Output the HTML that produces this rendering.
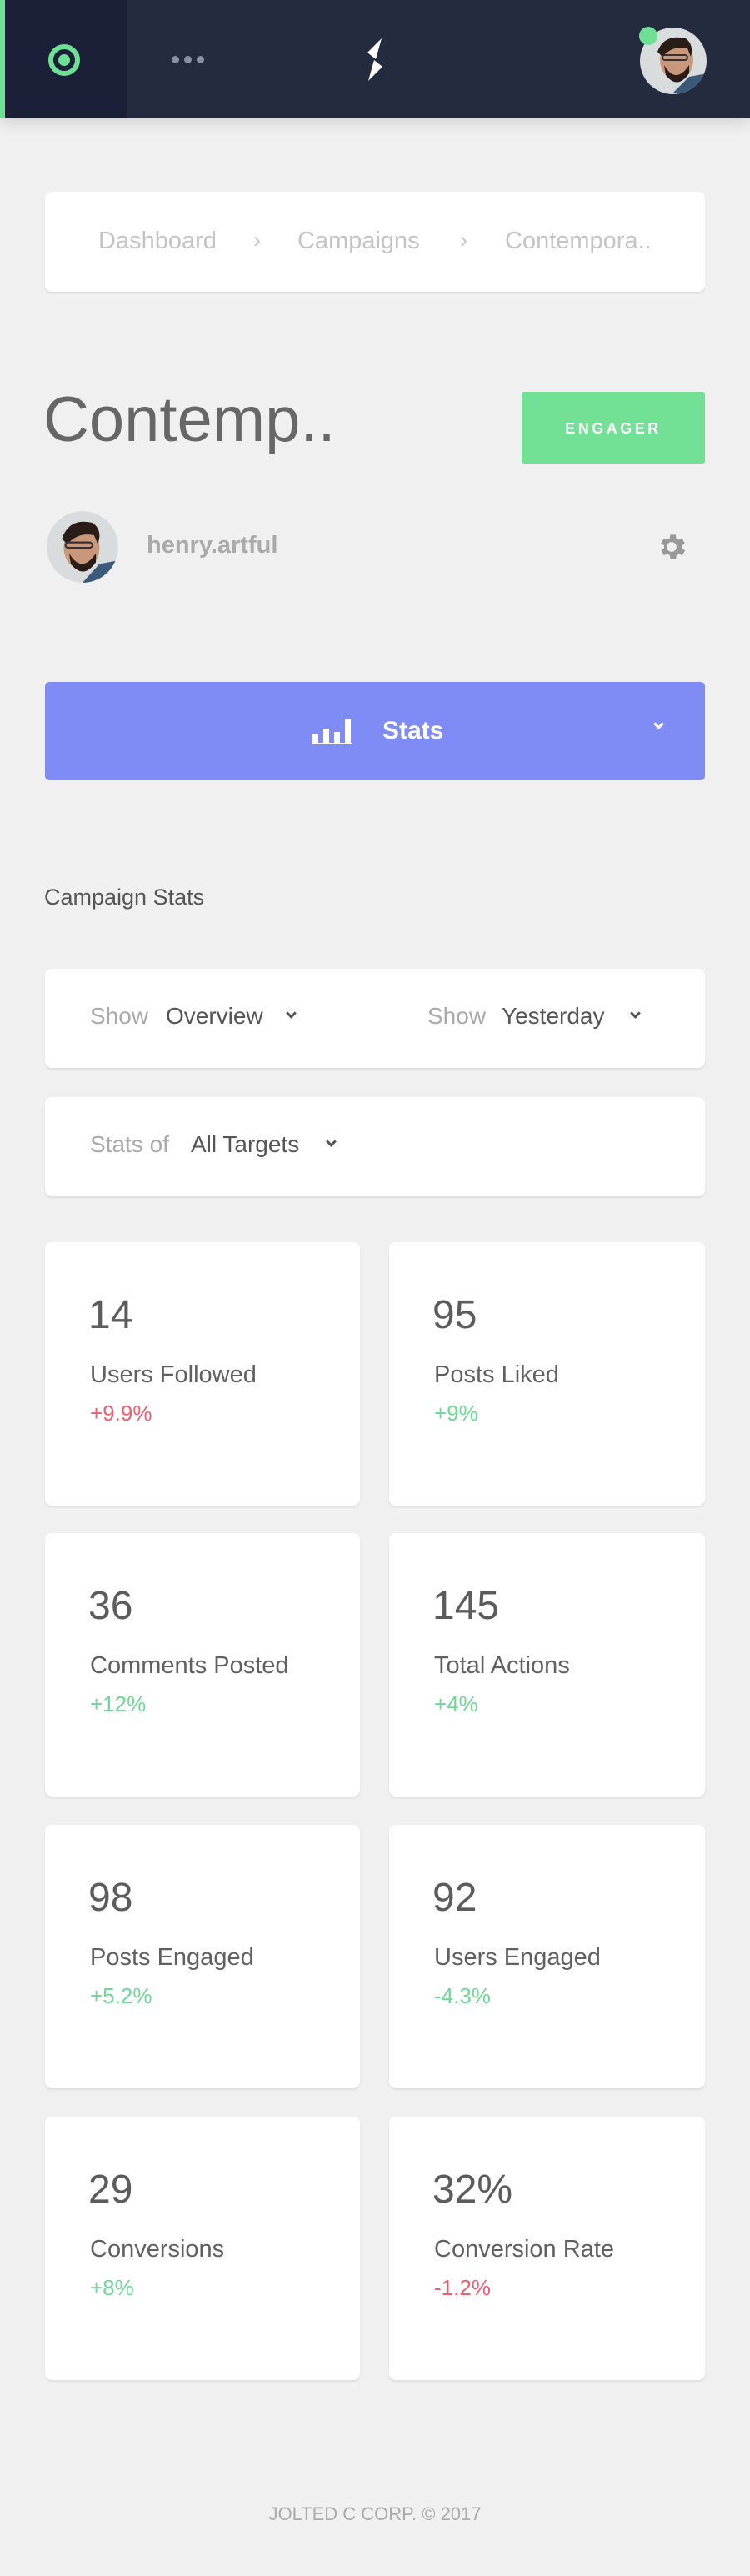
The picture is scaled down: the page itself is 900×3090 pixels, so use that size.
<!DOCTYPE html>
<html><head><meta charset="utf-8"><style>
*{margin:0;padding:0;box-sizing:border-box}
body{width:900px;height:3090px;background:#f0f0f0;font-family:"Liberation Sans",sans-serif;position:relative;overflow:hidden}
.a{position:absolute}
.card{position:absolute;background:#fff;border-radius:8px;box-shadow:0 2px 2px rgba(0,0,0,.08)}
.t{position:absolute;white-space:nowrap;line-height:1}
.num{font-size:48px;color:#5c5c5c}
.lab{font-size:29px;color:#606060}
.g{color:#6ed894}.r{color:#ef5d6e}
.chev{position:absolute;width:9px;height:9px;border-right:3px solid #555;border-bottom:3px solid #555;transform:rotate(45deg)}
</style></head><body>
<div class="a" style="left:0;top:0;width:900px;height:142px;background:#252b3f;box-shadow:0 6px 16px rgba(0,0,0,.12)"></div>
<div class="a" style="left:0;top:0;width:152px;height:142px;background:#1b2038"></div>
<div class="a" style="left:0;top:0;width:6px;height:142px;background:#6ee094"></div>
<div class="a" style="left:58px;top:53px;width:38px;height:38px;border-radius:50%;border:6px solid #6ee094"></div>
<div class="a" style="left:70px;top:65px;width:14px;height:14px;border-radius:50%;background:#6ee094"></div>
<div class="a" style="left:206px;top:67px;width:9px;height:9px;border-radius:50%;background:#8a8fa3"></div>
<div class="a" style="left:221px;top:67px;width:9px;height:9px;border-radius:50%;background:#8a8fa3"></div>
<div class="a" style="left:236px;top:67px;width:9px;height:9px;border-radius:50%;background:#8a8fa3"></div>
<svg class="a" style="left:0;top:0" width="900" height="142"><polygon points="458,46 441,63 451,71" fill="#fff"/><polygon points="449,72 459,80 442,97" fill="#fff"/></svg>
<svg class="a" style="left:767px;top:32px" width="82" height="82" viewBox="0 0 82 82">
<defs><clipPath id="c1"><circle cx="41" cy="41" r="40"/></clipPath></defs>
<g clip-path="url(#c1)"><rect width="82" height="82" fill="#d8dcdc"/><path d="M40 80 L60 60 L82 56 L82 82Z" fill="#3b5a7a"/><ellipse cx="45" cy="40" rx="20" ry="24" fill="#c9987c"/><path d="M22 30 Q30 8 56 14 Q66 22 62 36 L58 26 Q40 22 28 36Z" fill="#2a1c16"/><path d="M30 46 Q44 70 60 46 L60 56 Q46 76 32 58Z" fill="#2a1c16"/><rect x="28" y="34" width="30" height="6" rx="3" fill="none" stroke="#333" stroke-width="2"/></g></svg>
<div class="a" style="left:767px;top:32px;width:22px;height:22px;border-radius:50%;background:#6ee094"></div>

<div class="card" style="left:54px;top:230px;width:792px;height:120px"></div>
<div class="t" style="left:118px;top:275px;font-size:29px;color:#c4c4c4">Dashboard</div>
<div class="t" style="left:304px;top:275px;font-size:27px;color:#c4c4c4">›</div>
<div class="t" style="left:357px;top:275px;font-size:29px;color:#c4c4c4">Campaigns</div>
<div class="t" style="left:552px;top:275px;font-size:27px;color:#c4c4c4">›</div>
<div class="t" style="left:606px;top:275px;font-size:29px;color:#c4c4c4">Contempora..</div>

<div class="t" style="left:52px;top:466px;font-size:76px;color:#676767">Contemp..</div>
<div class="a" style="left:626px;top:470px;width:220px;height:86px;background:#72e095;border-radius:3px"></div>
<div class="t" style="left:626px;top:505px;width:220px;text-align:center;font-size:18px;font-weight:bold;letter-spacing:3.5px;color:#fff">ENGAGER</div>

<svg class="a" style="left:55px;top:612px" width="88" height="88" viewBox="0 0 82 82">
<defs><clipPath id="c2"><circle cx="41" cy="41" r="40"/></clipPath></defs>
<g clip-path="url(#c2)"><rect width="82" height="82" fill="#d8dcdc"/><path d="M40 82 L60 60 L82 56 L82 82Z" fill="#3b5a7a"/><ellipse cx="40" cy="42" rx="20" ry="24" fill="#c9987c"/><path d="M18 32 Q26 8 52 14 Q64 22 58 38 L54 28 Q36 24 24 38Z" fill="#2a1c16"/><path d="M26 48 Q40 72 56 48 L56 58 Q42 78 28 60Z" fill="#2a1c16"/><rect x="22" y="36" width="30" height="6" rx="3" fill="none" stroke="#333" stroke-width="2"/></g></svg>
<div class="t" style="left:176px;top:640px;font-size:29px;color:#aaa;font-weight:bold">henry.artful</div>
<svg class="a" style="left:786px;top:636px" width="40" height="40" viewBox="0 0 24 24"><path fill="#999" d="M19.4 13a7.5 7.5 0 0 0 0-2l2.1-1.6-2-3.5-2.5 1a7 7 0 0 0-1.7-1L15 3.2h-4l-.4 2.7a7 7 0 0 0-1.7 1l-2.5-1-2 3.5L6.6 11a7.5 7.5 0 0 0 0 2l-2.1 1.6 2 3.5 2.5-1a7 7 0 0 0 1.7 1l.4 2.7h4l.4-2.7a7 7 0 0 0 1.7-1l2.5 1 2-3.5zM12 15.5a3.5 3.5 0 1 1 0-7 3.5 3.5 0 0 1 0 7z"/></svg>

<div class="a" style="left:54px;top:818px;width:792px;height:118px;background:#7f8cf5;border-radius:5px"></div>
<svg class="a" style="left:374px;top:860px" width="50" height="34"><rect x="1" y="20" width="7" height="12" fill="#fff"/><rect x="14" y="14" width="7" height="18" fill="#fff"/><rect x="27" y="18" width="7" height="14" fill="#fff"/><rect x="40" y="3" width="7" height="29" fill="#fff"/><rect x="0" y="31" width="48" height="2" fill="#fff"/></svg>
<div class="t" style="left:459px;top:862px;font-size:30px;color:#fff;font-weight:bold">Stats</div>
<div class="chev" style="left:786px;top:864px;border-color:#fff"></div>

<div class="t" style="left:53px;top:1063px;font-size:27px;color:#555">Campaign Stats</div>

<div class="card" style="left:54px;top:1162px;width:792px;height:119px"></div>
<div class="t" style="left:108px;top:1205px;font-size:28px;color:#aaa">Show</div>
<div class="t" style="left:199px;top:1205px;font-size:28px;color:#555">Overview</div>
<div class="chev" style="left:345px;top:1211px"></div>
<div class="t" style="left:513px;top:1205px;font-size:28px;color:#aaa">Show</div>
<div class="t" style="left:602px;top:1205px;font-size:28px;color:#555">Yesterday</div>
<div class="chev" style="left:758px;top:1211px"></div>

<div class="card" style="left:54px;top:1316px;width:792px;height:119px"></div>
<div class="t" style="left:108px;top:1359px;font-size:28px;color:#aaa">Stats of</div>
<div class="t" style="left:229px;top:1359px;font-size:28px;color:#555">All Targets</div>
<div class="chev" style="left:393px;top:1365px"></div>

<div class="card" style="left:54px;top:1490px;width:378px;height:316px"></div>
<div class="card" style="left:467px;top:1490px;width:379px;height:316px"></div>
<div class="t num" style="left:106px;top:1554px">14</div><div class="t lab" style="left:108px;top:1635px">Users Followed</div><div class="t r" style="left:108px;top:1682px;font-size:26px">+9.9%</div>
<div class="t num" style="left:519px;top:1554px">95</div><div class="t lab" style="left:521px;top:1635px">Posts Liked</div><div class="t g" style="left:521px;top:1682px;font-size:26px">+9%</div>

<div class="card" style="left:54px;top:1839px;width:378px;height:316px"></div>
<div class="card" style="left:467px;top:1839px;width:379px;height:316px"></div>
<div class="t num" style="left:106px;top:1903px">36</div><div class="t lab" style="left:108px;top:1984px">Comments Posted</div><div class="t g" style="left:108px;top:2031px;font-size:26px">+12%</div>
<div class="t num" style="left:519px;top:1903px">145</div><div class="t lab" style="left:521px;top:1984px">Total Actions</div><div class="t g" style="left:521px;top:2031px;font-size:26px">+4%</div>

<div class="card" style="left:54px;top:2189px;width:378px;height:316px"></div>
<div class="card" style="left:467px;top:2189px;width:379px;height:316px"></div>
<div class="t num" style="left:106px;top:2253px">98</div><div class="t lab" style="left:108px;top:2334px">Posts Engaged</div><div class="t g" style="left:108px;top:2381px;font-size:26px">+5.2%</div>
<div class="t num" style="left:519px;top:2253px">92</div><div class="t lab" style="left:521px;top:2334px">Users Engaged</div><div class="t g" style="left:521px;top:2381px;font-size:26px">-4.3%</div>

<div class="card" style="left:54px;top:2539px;width:378px;height:316px"></div>
<div class="card" style="left:467px;top:2539px;width:379px;height:316px"></div>
<div class="t num" style="left:106px;top:2603px">29</div><div class="t lab" style="left:108px;top:2684px">Conversions</div><div class="t g" style="left:108px;top:2731px;font-size:26px">+8%</div>
<div class="t num" style="left:519px;top:2603px">32%</div><div class="t lab" style="left:521px;top:2684px">Conversion Rate</div><div class="t r" style="left:521px;top:2731px;font-size:26px">-1.2%</div>

<div class="t" style="left:0;top:3005px;width:900px;text-align:center;font-size:22px;color:#aaa">JOLTED C CORP. © 2017</div>
</body></html>
